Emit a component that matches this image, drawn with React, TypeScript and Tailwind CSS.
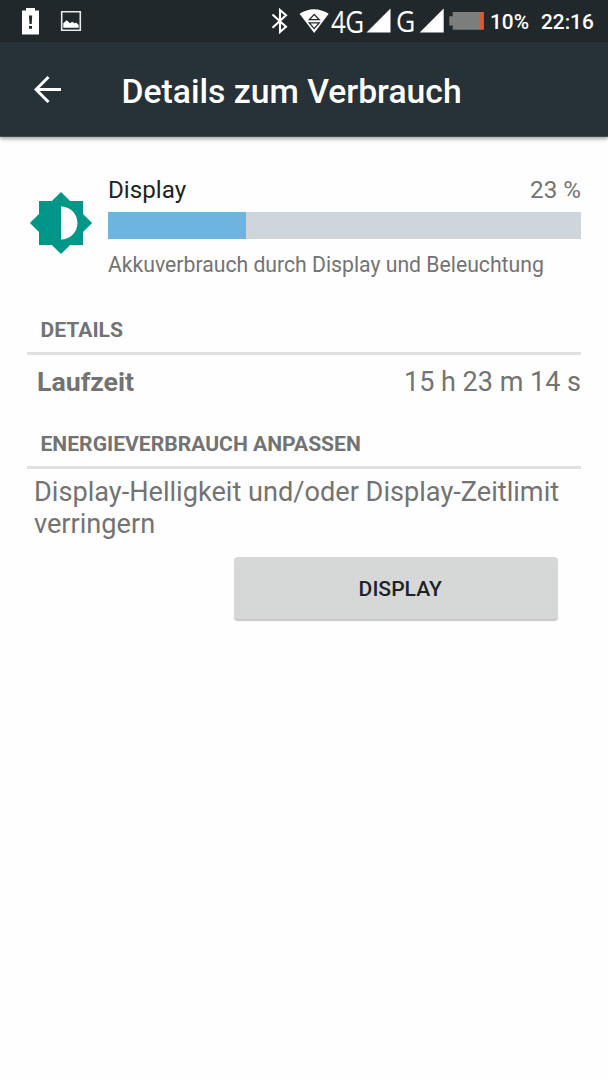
import type { ReactNode } from 'react';

function StatusBar() {
  return (
    <div className="flex h-[42px] items-center bg-[#21282c] text-white">
      <svg className="h-[42px] w-[262px] shrink-0" viewBox="0 0 262 42" fill="#fff">
        <path d="M26 8h9v2.5h4V34.5H22V10.5h4z" />
        <path d="M29 15.5h3.2l-.5 8.5h-2.2zM29 26h3v2.7h-3z" fill="#21282c" />
        <path d="M61.7 11.7h18.6v18.6H61.7z" fill="none" stroke="#e8eaea" strokeWidth="1.6" />
        <path d="M63.3 27.8v-4.6l3.4-2.9 3.3 2.9 2.1-1.5 2.6 1.6 1.4-.7 2.6 2.4v2.8z" />
      </svg>
      <svg className="h-[42px] w-[69px] shrink-0" viewBox="262 0 69 42">
        <path d="M272.5 14.5l13.5 12.2-6 5.3V10l6 5.2-13.5 12.5" fill="none" stroke="#fff" strokeWidth="2.1" />
        <path d="M299.5 13.8Q314 4.8 328.7 13.8L314.2 33z" fill="#fff" />
        <path d="M309.3 19.7l4.9-5.3 5 5.3zM309.3 22.8h9.9l-5 5.8z" fill="none" stroke="#21282c" strokeWidth="1.3" />
      </svg>
      <span className="w-[35px] origin-left scale-x-[.84] whitespace-nowrap pt-px font-['Open_Sans',sans-serif] text-[31px] font-medium leading-[41px] tracking-[-0.8px]">4G</span>
      <svg className="h-[42px] w-[30px] shrink-0" viewBox="366 0 30 42" fill="#fff"><path d="M390.5 8.5v24h-24z" /></svg>
      <span className="w-[23px] origin-left scale-x-[.9] font-['Open_Sans',sans-serif] text-[29.5px] font-medium leading-[42px]">G</span>
      <svg className="h-[42px] w-[71px] shrink-0" viewBox="419 0 71 42">
        <path d="M443.7 8.5v24h-24z" fill="#fff" />
        <path d="M452.7 12H481v17.7h-28.3v-4.2h-3.4v-9.3h3.4z" fill="#7c7e7d" />
        <path d="M480.3 12h3.6v17.7h-3.6z" fill="#ed5426" />
      </svg>
      <span className="w-[51px] whitespace-nowrap pt-[2px] text-[20.8px] font-medium leading-[40px]">10%</span>
      <span className="whitespace-nowrap pt-[2px] text-[20.8px] font-medium leading-[40px]">22:16</span>
    </div>
  );
}

function SectionTitle({ children }: { children: ReactNode }) {
  return (
    <h2 className="border-b-[3px] border-[#e0e0e0] pb-[8px] pl-[13.5px] text-[21.1px] font-bold leading-[28px]">
      {children}
    </h2>
  );
}

export default function App() {
  return (
    <div className="flex h-[1080px] w-[608px] flex-col overflow-hidden bg-[#fefefe] font-['Roboto',sans-serif] text-[#737373]">
      <StatusBar />
      <header className="flex h-[95px] shrink-0 items-center border-b border-[#424b4f] bg-[#273238] text-white shadow-[0_2px_4px_rgba(0,0,0,0.35)]">
        <svg className="ml-[34px] h-[28px] w-[28px]" viewBox="0 0 28 28" fill="none" stroke="#fff" strokeWidth="3">
          <path d="M27 14.5H2M14.5 2L2 14.5 14.5 27" />
        </svg>
        <h1 className="ml-[59.5px] pt-[5px] text-[33.7px] font-medium leading-[40px]">Details zum Verbrauch</h1>
      </header>
      <main className="flex flex-col pl-[27px] pr-[27px] pt-[39px]">
        <section className="flex">
          <svg className="ml-px mt-[13.5px] h-[66px] w-[66px] shrink-0" viewBox="0 0 24 24">
            <path d="M20 15.31L23.31 12 20 8.69V4h-4.69L12 .69 8.69 4H4v4.69L.69 12 4 15.31V20h4.69L12 23.31 15.31 20H20v-4.69zM12 18V6c3.31 0 6 2.69 6 6s-2.69 6-6 6z" fill="#009688" />
          </svg>
          <div className="ml-[14px] flex-1">
            <div className="flex justify-between text-[24.2px] leading-[28px]">
              <span className="text-[#1d2327]">Display</span>
              <span>23 %</span>
            </div>
            <div className="mt-[8px] h-[27px] bg-[#ced6db]">
              <div className="h-full w-[138px] bg-[#6db4e1]" />
            </div>
            <p className="mt-[12px] whitespace-nowrap text-[21.2px] leading-[28px]">Akkuverbrauch durch Display und Beleuchtung</p>
          </div>
        </section>
        <section className="mt-[37px]">
          <SectionTitle>DETAILS</SectionTitle>
          <div className="flex h-[53px] justify-between pl-[10px] pt-px text-[27px] leading-[53px]">
            <span className="text-[26.7px] font-bold">Laufzeit</span>
            <span>15 h 23 m 14 s</span>
          </div>
        </section>
        <section className="mt-[22px]">
          <SectionTitle>ENERGIEVERBRAUCH ANPASSEN</SectionTitle>
          <p className="whitespace-nowrap pl-[7px] pt-[7px] text-[27.15px] leading-[32px]">
            Display-Helligkeit und/oder Display-Zeitlimit<br />verringern
          </p>
          <button className="ml-[206.5px] mt-[17px] block h-[62px] w-[324.5px] rounded-[4px] bg-[#d6d8d7] pl-[9px] pt-[2px] text-[21.1px] font-medium text-[#1d2327] shadow-[0_2px_1px_rgba(0,0,0,0.22)]">
            DISPLAY
          </button>
        </section>
      </main>
    </div>
  );
}
